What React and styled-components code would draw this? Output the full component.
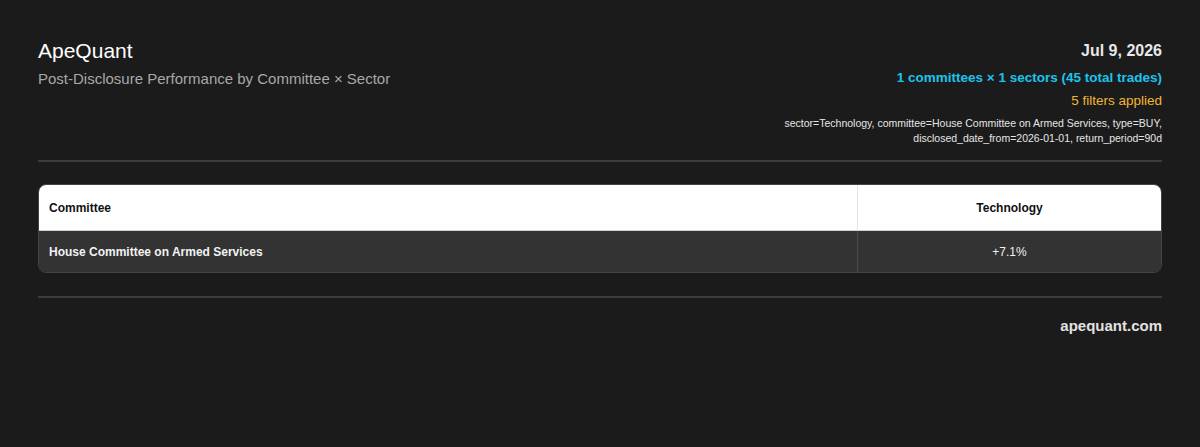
import styled, { createGlobalStyle } from "styled-components"

const GlobalStyle = createGlobalStyle`
  body {
    margin: 0;
    background: #1b1b1b;
    font-family: "Liberation Sans", Arial, sans-serif;
  }
`

const filters = "sector=Technology, committee=House Committee on Armed Services, type=BUY, disclosed_date_from=2026-01-01, return_period=90d"

const rows = [
  { committee: "House Committee on Armed Services", values: ["+7.1%"] },
]

export default function App() {
  return (
    <>
      <GlobalStyle />
      <Page>
        <Header>
          <Brand>
            <Title>ApeQuant</Title>
            <Subtitle>Post-Disclosure Performance by Committee × Sector</Subtitle>
          </Brand>
          <Meta>
            <Date>Jul 9, 2026</Date>
            <Summary>1 committees × 1 sectors (45 total trades)</Summary>
            <FilterCount>5 filters applied</FilterCount>
            <FilterList>{filters}</FilterList>
          </Meta>
        </Header>
        <Divider />
        <TableWrap>
          <Table>
            <thead>
              <tr>
                <HeadCell>Committee</HeadCell>
                <HeadCell $center>Technology</HeadCell>
              </tr>
            </thead>
            <tbody>
              {rows.map((row) => (
                <tr key={row.committee}>
                  <Cell $bold>{row.committee}</Cell>
                  {row.values.map((v, i) => (
                    <Cell key={i} $center>{v}</Cell>
                  ))}
                </tr>
              ))}
            </tbody>
          </Table>
        </TableWrap>
        <Divider />
        <Footer>apequant.com</Footer>
      </Page>
    </>
  )
}

const Page = styled.div`
  padding: 38px 38px 0;
  display: flex;
  flex-direction: column;
`
const Header = styled.div`
  display: flex;
  justify-content: space-between;
  align-items: flex-start;
  padding-bottom: 14px;
`
const Brand = styled.div`
  display: flex;
  flex-direction: column;
`
const Title = styled.h1`
  margin: 0;
  font-size: 21px;
  font-weight: 400;
  color: #ffffff;
  line-height: 26px;
`
const Subtitle = styled.div`
  margin-top: 5px;
  font-size: 15px;
  color: #a8a8a8;
  line-height: 20px;
`
const Meta = styled.div`
  display: flex;
  flex-direction: column;
  align-items: flex-end;
  text-align: right;
`
const Date = styled.div`
  font-size: 16px;
  font-weight: 700;
  color: #e8e8e8;
  line-height: 26px;
`
const Summary = styled.div`
  margin-top: 4px;
  font-size: 13.5px;
  font-weight: 700;
  color: #1ec3ec;
  line-height: 20px;
`
const FilterCount = styled.div`
  margin-top: 3px;
  font-size: 13.5px;
  color: #f2b630;
  line-height: 20px;
`
const FilterList = styled.div`
  margin-top: 5px;
  max-width: 382px;
  font-size: 10.5px;
  color: #e6e6e6;
  line-height: 15px;
`
const Divider = styled.hr`
  width: 100%;
  margin: 0;
  border: none;
  border-top: 2px solid #3c3c3c;
`
const TableWrap = styled.div`
  margin: 22px 0 23px;
  border-radius: 8px;
  overflow: hidden;
  border: 1px solid #444;
`
const Table = styled.table`
  width: 100%;
  border-collapse: collapse;
  font-size: 12px;
`
const HeadCell = styled.th`
  height: 45px;
  padding: 0 10px;
  background: #ffffff;
  color: #111;
  font-weight: 700;
  text-align: ${(p) => (p.$center ? "center" : "left")};
  border-bottom: 1px solid #cfcfcf;
  &:not(:last-child) {
    border-right: 1px solid #e4e4e4;
    width: 798px;
  }
`
const Cell = styled.td`
  height: 41px;
  padding: 0 10px;
  background: #333333;
  color: #f2f2f2;
  font-weight: ${(p) => (p.$bold ? 700 : 400)};
  text-align: ${(p) => (p.$center ? "center" : "left")};
  &:not(:last-child) {
    border-right: 1px solid #4a4a4a;
  }
`
const Footer = styled.div`
  padding-top: 19px;
  text-align: right;
  font-size: 15px;
  font-weight: 700;
  color: #e2e2e2;
`
